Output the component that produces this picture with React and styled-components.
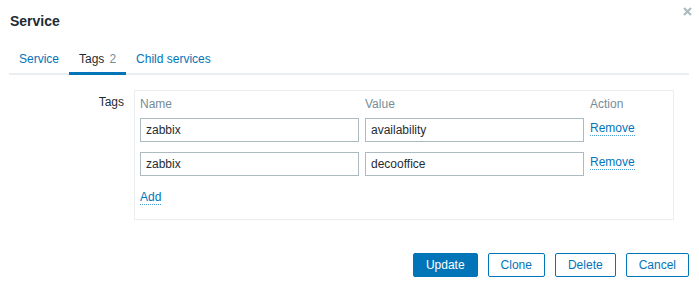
import { Fragment } from "react";
import styled, { createGlobalStyle } from "styled-components";

const GlobalStyle = createGlobalStyle`
  html, body {
    margin: 0;
    padding: 0;
    background: #ffffff;
    font-family: "Liberation Sans", Arial, sans-serif;
    font-size: 12px;
    color: #1f2c33;
  }
`;

const tags = [
  { name: "zabbix", value: "availability" },
  { name: "zabbix", value: "decooffice" },
];

const Dialog = styled.div`
  position: relative;
  width: 699px;
  height: 286px;
  background: #ffffff;
`;

const Header = styled.div`
  padding: 12px 10px 0;
`;

const Title = styled.h4`
  margin: 0;
  font-size: 14px;
  line-height: 18px;
  font-weight: bold;
  color: #1f2c33;
`;

const CloseButton = styled.button`
  position: absolute;
  top: 7px;
  right: 7px;
  width: 9px;
  height: 9px;
  padding: 0;
  border: 0;
  background: none;
  display: flex;
  cursor: pointer;
`;

const TabList = styled.ul`
  display: flex;
  margin: 14px 10px 0 9px;
  padding: 0;
  list-style: none;
  border-bottom: 2px solid #ebeef0;
`;

const Tab = styled.li`
  padding: 8px 10px 6px;
  line-height: 14px;
  margin-bottom: -2px;
  border-bottom: 3px solid ${(p) => (p.$active ? "#0275b8" : "transparent")};
  color: ${(p) => (p.$active ? "#1f2c33" : "#0275b8")};
`;

const Count = styled.span`
  color: #768d99;
  margin-left: 5px;
`;

const FormRow = styled.div`
  display: grid;
  grid-template-columns: 114px 540px;
  column-gap: 10px;
  margin: 15px 10px 0 10px;
`;

const Label = styled.label`
  text-align: right;
  padding-top: 5px;
  line-height: 14px;
`;

const TagBox = styled.div`
  border: 1px solid #ebeef0;
  padding: 6px 5px 14px;
`;

const TagGrid = styled.div`
  display: grid;
  grid-template-columns: 219px 219px auto;
  column-gap: 6px;
  row-gap: 10px;
`;

const HeadCell = styled.div`
  color: #768d99;
  line-height: 14px;
  margin-bottom: -3px;
`;

const Input = styled.input`
  box-sizing: border-box;
  width: 100%;
  height: 24px;
  margin: 0;
  padding: 0 5px;
  border: 1px solid #acbbc2;
  border-radius: 0;
  font-family: inherit;
  font-size: 12px;
  color: #1f2c33;
  background: #ffffff;
  outline: none;
`;

const LinkAction = styled.a`
  align-self: start;
  justify-self: start;
  margin-top: ${(p) => p.$offset || 0}px;
  line-height: 14px;
  color: #0275b8;
  text-decoration: none;
  border-bottom: 1px dotted #4a9fd4;
  cursor: pointer;
`;

const Footer = styled.div`
  display: flex;
  justify-content: flex-end;
  gap: 10px;
  margin-top: 33px;
  padding-right: 10px;
`;

const Button = styled.button`
  box-sizing: border-box;
  height: 24px;
  padding: 0 12px;
  border: 1px solid #0275b8;
  border-radius: 2px;
  font-family: inherit;
  font-size: 12px;
  background: ${(p) => (p.$primary ? "#0275b8" : "#ffffff")};
  color: ${(p) => (p.$primary ? "#ffffff" : "#0275b8")};
  cursor: pointer;
`;

export default function App() {
  return (
    <>
      <GlobalStyle />
      <Dialog>
        <Header>
          <Title>Service</Title>
        </Header>
        <CloseButton title="Close">
          <svg width="9" height="9" viewBox="0 0 9 9">
            <path d="M1 1L8 8M8 1L1 8" stroke="#acbbc2" strokeWidth="2.2" />
          </svg>
        </CloseButton>

        <TabList>
          <Tab>Service</Tab>
          <Tab $active>
            Tags<Count>2</Count>
          </Tab>
          <Tab>Child services</Tab>
        </TabList>

        <FormRow>
          <Label>Tags</Label>
          <TagBox>
            <TagGrid>
              <HeadCell>Name</HeadCell>
              <HeadCell>Value</HeadCell>
              <HeadCell>Action</HeadCell>
              {tags.map((t, i) => (
                <Fragment key={i}>
                  <Input defaultValue={t.name} />
                  <Input defaultValue={t.value} />
                  <LinkAction $offset={3}>Remove</LinkAction>
                </Fragment>
              ))}
              <LinkAction $offset={4}>Add</LinkAction>
            </TagGrid>
          </TagBox>
        </FormRow>

        <Footer>
          <Button $primary>Update</Button>
          <Button>Clone</Button>
          <Button>Delete</Button>
          <Button>Cancel</Button>
        </Footer>
      </Dialog>
    </>
  );
}
